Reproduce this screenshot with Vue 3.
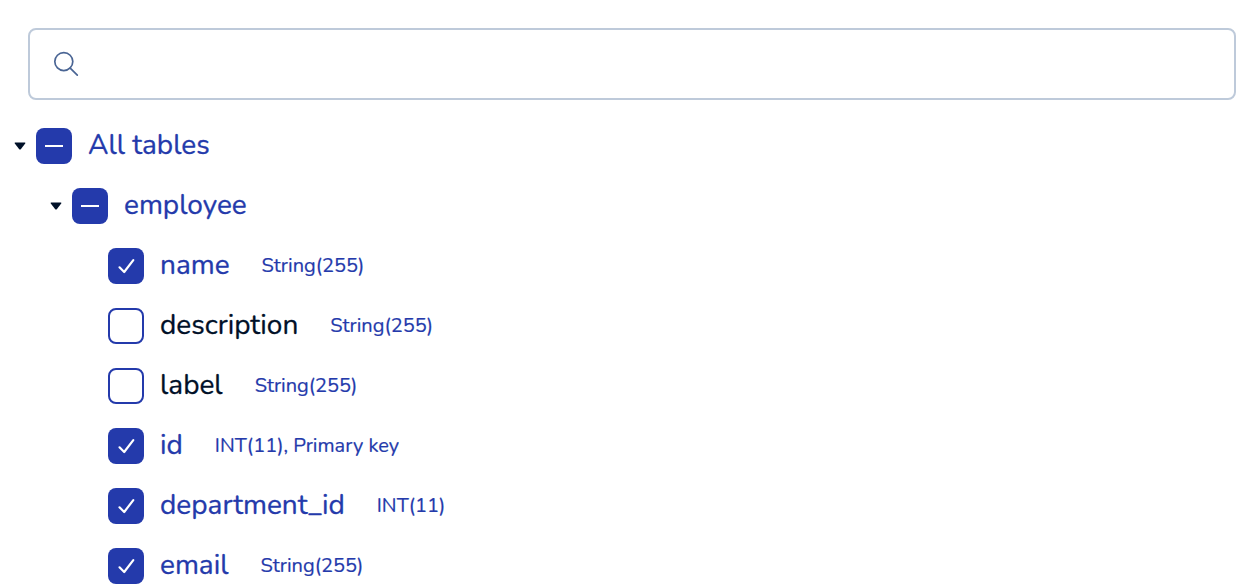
<script setup>
import { ref } from 'vue'

const query = ref('')
const rows = [
  { label: 'All tables', level: 0, state: 'partial' },
  { label: 'employee', level: 1, state: 'partial' },
  { label: 'name', level: 2, state: 'checked', type: 'String(255)' },
  { label: 'description', level: 2, state: 'empty', type: 'String(255)' },
  { label: 'label', level: 2, state: 'empty', type: 'String(255)' },
  { label: 'id', level: 2, state: 'checked', type: 'INT(11), Primary key' },
  { label: 'department_id', level: 2, state: 'checked', type: 'INT(11)' },
  { label: 'email', level: 2, state: 'checked', type: 'String(255)' },
]
</script>

<template>
  <main class="panel">
    <label class="search">
      <svg class="search-icon" viewBox="0 0 28 28">
        <circle cx="11.8" cy="11.6" r="9" />
        <path d="M18.2 18.200L25.300 25.200" />
      </svg>
      <input v-model="query" type="text" aria-label="Search" />
    </label>
    <ul class="tree">
      <li v-for="row in rows" :key="row.label" class="row" :class="['level-' + row.level, row.state]">
        <svg v-if="row.level < 2" class="caret" viewBox="0 0 12 8">
          <path d="M1.2.6h9.6q1 0 .4 1L7 6.9q-1 1-2 0L.8 1.600q-.6-1 .4-1z" />
        </svg>
        <span class="box">
          <svg v-if="row.state === 'partial'" viewBox="0 0 36 36"><path d="M9 18H27" /></svg>
          <svg v-else-if="row.state === 'checked'" viewBox="0 0 36 36">
            <path class="tick" d="M11.500 19.300L16.200 24L25.300 12.100" />
          </svg>
        </span>
        <span class="name">{{ row.label }}</span>
        <span v-if="row.type" class="type">{{ row.type }}</span>
      </li>
    </ul>
  </main>
</template>

<style>
body { background: #fff; overflow: hidden; }
</style>

<style scoped>
.panel { box-sizing: border-box; height: 588px; padding: 28px 20px 0 0; overflow: hidden; font-family: Nunito, Lato, sans-serif; color: #243aab; }
.search { display: flex; align-items: center; box-sizing: border-box; height: 72px; margin-left: 28px; padding: 0 22px; border: 2px solid #becada; border-radius: 8px; }
.search-icon { width: 28px; height: 28px; flex: none; fill: none; stroke: #4a6594; stroke-width: 1.7; stroke-linecap: round; }
input { flex: 1; min-width: 0; margin-left: 14px; border: 0; outline: 0; background: none; font: inherit; font-size: 28px; }
.tree { list-style: none; margin: 16px 0 0; padding: 0; }
.row { display: flex; align-items: center; height: 60px; white-space: nowrap; }
.level-0 { padding-left: 14px; }
.level-1 { padding-left: 50px; }
.level-2 { padding-left: 108px; }
.caret { width: 12px; height: 8px; margin-right: 10px; fill: #001028; }
.box { box-sizing: border-box; width: 36px; height: 36px; flex: none; border-radius: 8px; background: #243aab; }
.box svg { display: block; width: 36px; height: 36px; fill: none; stroke: #fff; stroke-width: 2; }
.box .tick { stroke-width: 2.2; stroke-linecap: round; stroke-linejoin: round; }
.empty .box { border: 2px solid #243aab; background: #fff; }
.empty .name { color: #001028; }
.name { flex: none; margin-left: 16px; padding-bottom: 2px; font-size: 28px; line-height: 36px; -webkit-text-stroke: 0.3px currentColor; }
.type { margin-left: 32px; font-size: 20px; line-height: 28px; -webkit-text-stroke: 0.2px currentColor; }
</style>
